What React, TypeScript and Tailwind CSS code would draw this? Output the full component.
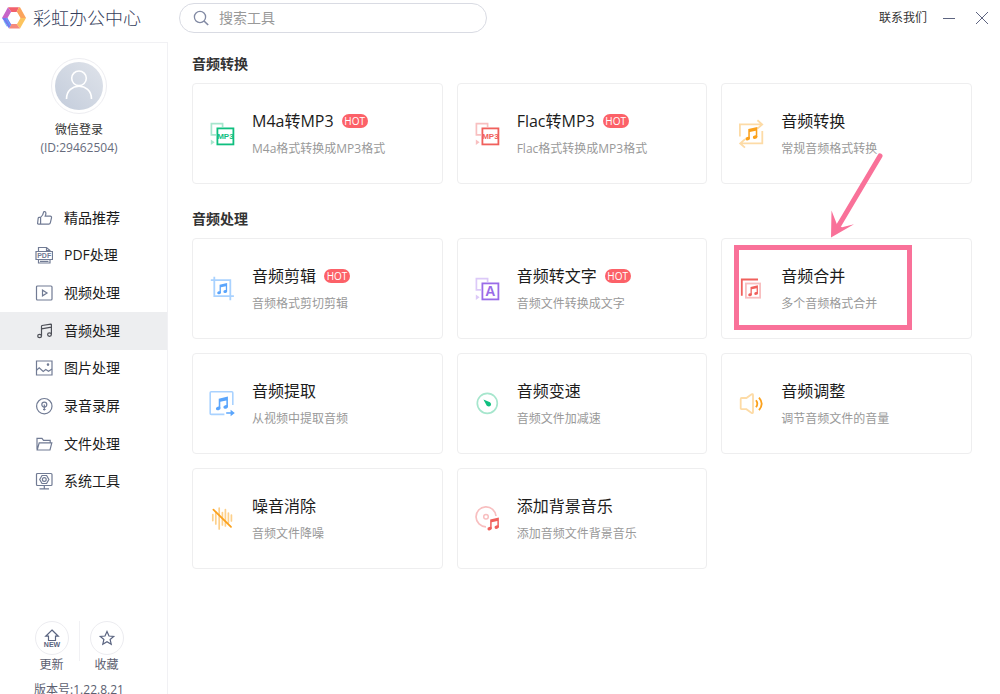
import { useState, type ReactNode } from "react";
import clsx from "clsx";

const RED = "#f0605c";
const PINK = "#f8bfc0";
const GREEN = "#0fbf7f";
const MINT = "#a6e6cd";
const BLUE = "#5aa5fc";
const SKY = "#a9d2ff";
const ORANGE = "#fba11c";
const PEACH = "#fddba6";

type NoteProps = { x: number; y: number; color: string; scale?: number };

// beamed pair of notes, about 11 units wide
const Note = ({ x, y, color, scale = 1 }: NoteProps) => (
  <g transform={`translate(${x} ${y}) scale(${scale})`} fill={color}>
    <path d="M2.8 1.9L11 0v9.2H9.6V3.4L4.2 4.6v6H2.8z" />
    <ellipse cx="2.3" cy="10.6" rx="2.1" ry="1.6" transform="rotate(-15 2.3 10.6)" />
    <ellipse cx="9" cy="9.2" rx="2.1" ry="1.6" transform="rotate(-15 9 9.2)" />
  </g>
);

const ConvertIcon = ({ dark, light, label, size }: { dark: string; light: string; label: string; size: number }) => (
  <>
    <path d="M6 13.8H1.4V2.6h11.2V6" stroke={light} strokeWidth="1.7" />
    <path d="M.8 18.6l3.8 2.7-3.8 2.7z" fill={light} />
    <rect x="7.4" y="7.4" width="16" height="16" stroke={dark} strokeWidth="1.8" />
    <text
      x="15.4"
      y={15.4 + size * 0.36}
      fontSize={size}
      fontWeight="700"
      textAnchor="middle"
      fill={dark}
      fontFamily="Liberation Sans, sans-serif"
    >
      {label}
    </text>
  </>
);

const toolIcons: Record<string, ReactNode> = {
  m4a: <ConvertIcon dark={GREEN} light={MINT} label="MP3" size={8} />,
  flac: <ConvertIcon dark={RED} light={PINK} label="MP3" size={8} />,
  text: <ConvertIcon dark="#9a6ce8" light="#dcc9f8" label="A" size={14} />,
  convert: (
    <>
      <g stroke={PEACH} strokeWidth="1.8">
        <path d="M.9 15.5V3.4h22M18.4-.8l4.8 4.2-4.8 4.2" />
        <path d="M23.3 10v12.4H1.2M6 18.2l-4.8 4.2L6 26.6" />
      </g>
      <Note x={6.2} y={6} color={ORANGE} scale={1.1} />
    </>
  ),
  cut: (
    <>
      <path d="M4.3.8v19.4h19.6M.8 4.2h19.5v20" stroke={SKY} strokeWidth="1.8" />
      <Note x={7} y={7} color={BLUE} scale={0.92} />
    </>
  ),
  merge: (
    <>
      <path d="M2.8 19.8V3.5H19" stroke={RED} strokeWidth="1.8" />
      <rect x="6.9" y="7.5" width="14.2" height="14.2" stroke={PINK} strokeWidth="1.8" />
      <Note x={9} y={9.2} color={RED} scale={0.9} />
    </>
  ),
  extract: (
    <>
      <path d="M22.8 14V1.8q0-1-1-1H1.2q-1 0-1 1v20.6q0 1 1 1h13.2" stroke={SKY} strokeWidth="1.6" />
      <Note x={5.6} y={5.6} color={BLUE} scale={1.12} />
      <path d="M16.2 21.2h4.4v-2.4l4.2 3.2-4.2 3.2v-2.4h-4.4z" fill={BLUE} />
    </>
  ),
  speed: (
    <>
      <circle cx="12.3" cy="12.3" r="10" stroke={MINT} strokeWidth="1.7" />
      <path d="M8.4 8.6l6.6 2.6q2 1.800.6 3.600-1.600 1.600-3.800 0z" fill={GREEN} />
    </>
  ),
  volume: (
    <>
      <path
        d="M2.6 7h4.8l5.2-3.7q1.4-.8 1.4.9v16.8q0 1.7-1.4.9L7.4 18.2H2.6q-.9 0-.9-.9V7.9q0-.9.9-.9z"
        stroke={PEACH}
        strokeWidth="1.8"
      />
      <path d="M17 9.3q2.600 3.500 0 7M20 6.600q5.400 6.200 0 12.600" stroke={ORANGE} strokeWidth="1.8" />
    </>
  ),
  noise: (
    <>
      <path
        d="M2.8 8.6v6M5.8 6v12M9.2 2v21M12.4 6.5v12.5M15.4 3.5v16.5M18.4 7v10M21.4 9v6"
        stroke="#fdd08a"
        strokeWidth="1.7"
        strokeLinecap="round"
      />
      <path d="M3.4 3.6L21 20.8" stroke={ORANGE} strokeWidth="1.8" strokeLinecap="round" />
    </>
  ),
  music: (
    <>
      <path d="M11 20.8A10 10 0 1 1 21 10" stroke={PINK} strokeWidth="1.7" />
      <circle cx="11" cy="10.8" r="2.3" stroke={PINK} strokeWidth="1.5" />
      <Note x={12.2} y={11.4} color={RED} scale={1.06} />
    </>
  ),
};

const navIcons: Record<string, ReactNode> = {
  thumb: (
    <path d="M5.6 8.4C7.4 7 8.3 5.3 8.6 3.2c.2-1 2.3-.9 2.3 1 0 1.1-.3 2-.7 3h5c1 0 1.5.8 1.3 1.7l-1.2 5c-.2.8-.7 1.2-1.5 1.2H3.4c-.6 0-.9-.4-.8-.9l.6-5.1c.1-.5.4-.7.9-.7zM5.6 8.4v6.6" />
  ),
  pdf: (
    <>
      <path d="M3.5 5.5v-4h8l3.5 3v1M11.5 1.5v3H15M3.5 13.5V17H15v-3.5M1 5.5h16.5v8H1zM5 15.3h8.500" />
      <text
        x="9.2"
        y="12"
        fontSize="7"
        fontWeight="700"
        textAnchor="middle"
        fill="currentColor"
        stroke="none"
        fontFamily="Liberation Sans, sans-serif"
      >
        PDF
      </text>
    </>
  ),
  video: (
    <>
      <rect x="1.5" y="2" width="15.5" height="14" rx="1" />
      <path d="M7.5 6.2v5.6l4.5-2.8z" />
    </>
  ),
  audio: (
    <>
      <path d="M6.5 13.8V4.3q0-.6.6-.8l8.7-1.4q.6 0 .6.5v9.7M6.5 6.9l9.9-1.7" />
      <ellipse cx="4.6" cy="14" rx="1.9" ry="1.7" />
      <ellipse cx="14.5" cy="12.6" rx="1.9" ry="1.7" />
    </>
  ),
  image: (
    <>
      <path d="M1.5 2H17v14H1.5z" />
      <path d="M1.5 11.2l2.7-2.3 4 3.6 2.6-2 2.7 1.7 3.5-2.2" />
      <circle cx="13" cy="5.600" r=".7" fill="currentColor" />
    </>
  ),
  record: (
    <>
      <circle cx="9.3" cy="9.2" r="7.7" />
      <circle cx="9.3" cy="7.6" r="2.5" />
      <path d="M9.3 7.5v6M8 12.5h2.6" />
    </>
  ),
  folder: <path d="M2 14.5V3.3h5l1.5 2h6.7v2.5M2.2 15l2-7.2h12.6L15 15z" />,
  system: (
    <>
      <rect x="1.5" y="1.5" width="15.5" height="12" rx="1" />
      <path d="M9.3 13.5v3M4.5 16.8H14" />
      <path d="M7 3.5h4.6l2.3 4-2.3 4H7l-2.3-4z" />
      <circle cx="9.3" cy="7.5" r="1.9" />
    </>
  ),
};

const navItems = [
  { icon: "thumb", label: "精品推荐" },
  { icon: "pdf", label: "PDF处理" },
  { icon: "video", label: "视频处理" },
  { icon: "audio", label: "音频处理" },
  { icon: "image", label: "图片处理" },
  { icon: "record", label: "录音录屏" },
  { icon: "folder", label: "文件处理" },
  { icon: "system", label: "系统工具" },
];

type Tool = { icon: string; title: string; desc: string; hot?: boolean; marked?: boolean };

const sections: { title: string; tools: Tool[] }[] = [
  {
    title: "音频转换",
    tools: [
      { icon: "m4a", title: "M4a转MP3", desc: "M4a格式转换成MP3格式", hot: true },
      { icon: "flac", title: "Flac转MP3", desc: "Flac格式转换成MP3格式", hot: true },
      { icon: "convert", title: "音频转换", desc: "常规音频格式转换" },
    ],
  },
  {
    title: "音频处理",
    tools: [
      { icon: "cut", title: "音频剪辑", desc: "音频格式剪切剪辑", hot: true },
      { icon: "text", title: "音频转文字", desc: "音频文件转换成文字", hot: true },
      { icon: "merge", title: "音频合并", desc: "多个音频格式合并", marked: true },
      { icon: "extract", title: "音频提取", desc: "从视频中提取音频" },
      { icon: "speed", title: "音频变速", desc: "音频文件加减速" },
      { icon: "volume", title: "音频调整", desc: "调节音频文件的音量" },
      { icon: "noise", title: "噪音消除", desc: "音频文件降噪" },
      { icon: "music", title: "添加背景音乐", desc: "添加音频文件背景音乐" },
    ],
  },
];

const Logo = () => (
  <svg className="h-6 w-6" viewBox="0 0 24 24">
    <path d="M6 1.2h11l-2.5 5h-5z" fill="#f2606c" />
    <path d="M17 1.2h1L24 12h-6l-3.500-5.800z" fill="#fba45c" />
    <path d="M24 12l-6 10.5-3.5-4.7L18 12z" fill="#fcc45e" />
    <path d="M18 22.5H7l2.5-4.7h5z" fill="#f58a7c" />
    <path d="M7 22.5L0 12h6l3.5 5.800z" fill="#7379f0" />
    <path d="M0 12L6 1.2l3.5 5L6 12z" fill="#c765c8" />
    <path d="M2 15l3 5.500M4 12l4.500 8" stroke="#5fb4f5" strokeWidth=".8" />
    <path d="M9 6h6l3.5 6-3.5 6H9l-3.5-6z" fill="#fff" />
  </svg>
);

// pink frame and arrow pointing at the recommended tool
const Marker = () => (
  <>
    <span className="pointer-events-none absolute top-[6px] left-3 z-10 h-[85px] w-[178px] border-5 border-[#f97199]" />
    <svg
      className="pointer-events-none absolute -top-[90px] left-[104px] z-10 h-[92px] w-[64px]"
      viewBox="0 0 64 92"
      fill="none"
    >
      <path d="M54 7L13 76" stroke="#f97199" strokeWidth="5" strokeLinecap="round" />
      <path d="M5 88.5L5.500 61.500L11 75.500l5 2.800 12-3z" fill="#f97199" />
    </svg>
  </>
);

const ToolCard = ({ icon, title, desc, hot, marked }: Tool) => (
  <button
    type="button"
    className="relative flex h-[101px] items-center gap-4 rounded border border-[#eeeeef] bg-white pl-[17px] text-left"
  >
    <svg className="h-[26px] w-[26px] shrink-0 overflow-visible" viewBox="0 0 26 26" fill="none">
      {toolIcons[icon]}
    </svg>
    <span className="flex flex-col gap-[6px] whitespace-nowrap">
      <span className="flex items-center gap-2 text-base leading-6 text-[#1c1c1c]">
        {title}
        {hot && (
          <span className="flex h-[14px] w-[26px] items-center justify-center rounded-full bg-[#fc6168] text-[10px] leading-none font-medium text-white">
            HOT
          </span>
        )}
      </span>
      <span className="text-xs leading-5 text-[#999]">{desc}</span>
    </span>
    {marked && <Marker />}
  </button>
);

const App = () => {
  const [active, setActive] = useState("audio");
  const [query, setQuery] = useState("");

  return (
    <div className="flex h-screen flex-col overflow-hidden bg-white font-['Open_Sans','Noto_Sans_CJK_SC',sans-serif]">
      <header className="flex h-9 shrink-0 items-center pr-3">
        <div className="flex w-[179px] shrink-0 items-center gap-[7px] pl-[2px]">
          <Logo />
          <h1 className="text-lg leading-6 font-light text-[#363e5c]">彩虹办公中心</h1>
        </div>
        <label className="flex h-[30px] w-[308px] items-center gap-[9px] rounded-full border border-[#d9dbe3] pl-3">
          <svg className="h-[18px] w-[18px] shrink-0" viewBox="0 0 18 18" fill="none" stroke="#8189a3" strokeWidth="1.3">
            <circle cx="8" cy="8" r="5.6" />
            <path d="M12 12l4.2 4" strokeWidth="1.6" />
          </svg>
          <input
            className="min-w-0 flex-1 bg-transparent text-sm outline-none placeholder:text-[#999]"
            placeholder="搜索工具"
            aria-label="搜索工具"
            value={query}
            onChange={(e) => setQuery(e.target.value)}
          />
        </label>
        <a href="#contact" className="ml-auto text-xs text-[#333]">
          联系我们
        </a>
        <button type="button" aria-label="最小化" className="ml-4">
          <svg className="h-3 w-3" viewBox="0 0 12 12" stroke="#5d6480">
            <path d="M0 6.5h12" />
          </svg>
        </button>
        <button type="button" aria-label="关闭" className="ml-[21px]">
          <svg className="h-3 w-3" viewBox="0 0 12 12" stroke="#5d6480">
            <path d="M0 0l12 12M12 0L0 12" />
          </svg>
        </button>
      </header>

      <div className="flex min-h-0 flex-1">
        <aside className="mt-[6px] flex w-[168px] shrink-0 flex-col border-t border-r border-[#f1f1f4]">
          <div className="flex flex-col items-center pt-[15px] pr-[9px] text-xs leading-[18px]">
            <div className="mb-[7px] rounded-full border border-[#ededf1] p-[3px]">
              <svg className="h-12 w-12" viewBox="0 0 48 48" fill="none">
                <defs>
                  <linearGradient id="avatar" x1="1" y1="0" x2="0" y2="1">
                    <stop stopColor="#dfe3ea" />
                    <stop offset="1" stopColor="#c3ccdb" />
                  </linearGradient>
                </defs>
                <circle cx="24" cy="24" r="24" fill="url(#avatar)" />
                <circle cx="24" cy="16.3" r="7.3" stroke="#fff" strokeWidth="1.6" />
                <path d="M11.5 37c0-17 25-17 25 0" stroke="#fff" strokeWidth="1.6" />
              </svg>
            </div>
            <button type="button" className="text-[#333]">微信登录</button>
            <p className="text-[#666b7c]">(ID:29462504)</p>
          </div>

          <nav className="mt-[42px] grid h-[301px] shrink-0 auto-rows-fr">
            {navItems.map(({ icon, label }) => (
              <button
                key={icon}
                type="button"
                onClick={() => setActive(icon)}
                className={clsx(
                  "flex items-center gap-[11px] pl-[35px] text-sm text-[#1c1c1c]",
                  active === icon && "bg-[#edeef0]"
                )}
              >
                <svg
                  className={clsx("h-[18px] w-[18px]", active === icon ? "text-[#4d4f57]" : "text-[#717b94]")}
                  viewBox="0 0 18 18"
                  fill="none"
                  stroke="currentColor"
                  strokeWidth="1.2"
                >
                  {navIcons[icon]}
                </svg>
                {label}
              </button>
            ))}
          </nav>

          <div className="mt-auto -mb-[5px] pr-[9px] text-xs leading-[18px] text-[#5c6070]">
            <div className="flex justify-center gap-[10px]">
              <button type="button" className="flex flex-col items-center gap-px">
                <span className="rounded-full border border-[#ececf0] p-1">
                  <svg className="h-6 w-6" viewBox="0 0 24 24" fill="none" stroke="#5a6480">
                    <path d="M12 4l6.3 6.2h-2.8v4.300h-7v-4.300H5.700z" strokeWidth="1.2" />
                    <text
                      x="12"
                      y="21"
                      fontSize="7"
                      fontWeight="700"
                      textAnchor="middle"
                      fill="#5a6480"
                      stroke="none"
                      fontFamily="Liberation Sans, sans-serif"
                    >
                      NEW
                    </text>
                  </svg>
                </span>
                更新
              </button>
              <span className="h-10 w-px bg-[#f1f1f4]" />
              <button type="button" className="flex flex-col items-center gap-px">
                <span className="rounded-full border border-[#ececf0] p-1">
                  <svg className="h-6 w-6" viewBox="0 0 24 24" fill="none" stroke="#5a6480">
                    <path
                      d="M12 5.5l2 4.500 4.700.400-3.600 3.100 1.100 4.700-4.200-2.500-4.200 2.500 1.100-4.700-3.600-3.100 4.700-.400z"
                      strokeWidth="1.2"
                    />
                  </svg>
                </span>
                收藏
              </button>
            </div>
            <p className="mt-[7px] text-center">版本号:1.22.8.21</p>
          </div>
        </aside>

        <main className="flex min-w-0 flex-1 flex-col gap-[25px] pt-[18px] pr-7 pl-6">
          {sections.map((section) => (
            <section key={section.title}>
              <h2 className="mb-[9px] text-sm leading-5 font-bold text-[#333]">{section.title}</h2>
              <div className="grid grid-cols-3 gap-[14px]">
                {section.tools.map((tool) => (
                  <ToolCard key={tool.icon} {...tool} />
                ))}
              </div>
            </section>
          ))}
        </main>
      </div>
    </div>
  );
};

export default App;
